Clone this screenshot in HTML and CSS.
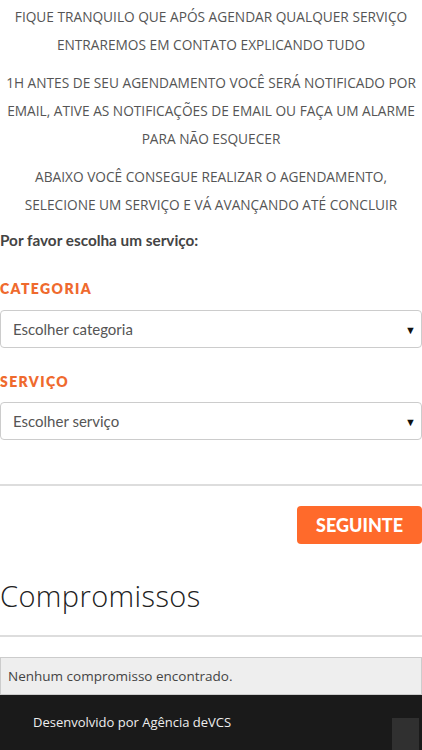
FILE: index.html
```html
<!DOCTYPE html>
<html lang="pt">
<head>
<meta charset="utf-8">
<title>Agendamento</title>
<link rel="stylesheet" href="styles.css">
</head>
<body>
<main class="page">
  <section class="intro">
    <p>FIQUE TRANQUILO QUE APÓS AGENDAR QUALQUER SERVIÇO ENTRAREMOS EM CONTATO EXPLICANDO TUDO</p>
    <p>1H ANTES DE SEU AGENDAMENTO VOCÊ SERÁ NOTIFICADO POR EMAIL, ATIVE AS NOTIFICAÇÕES DE EMAIL OU FAÇA UM ALARME PARA NÃO ESQUECER</p>
    <p>ABAIXO VOCÊ CONSEGUE REALIZAR O AGENDAMENTO, SELECIONE UM SERVIÇO E VÁ AVANÇANDO ATÉ CONCLUIR</p>
  </section>
  <form class="booking">
    <h3 class="prompt">Por favor escolha um serviço:</h3>
    <label class="field-label field-first">CATEGORIA</label>
    <div class="select"><span>Escolher categoria</span><span class="arrow">▼</span></div>
    <label class="field-label">SERVIÇO</label>
    <div class="select"><span>Escolher serviço</span><span class="arrow">▼</span></div>
    <hr class="rule rule-form">
    <div class="actions"><button type="button" class="btn">SEGUINTE</button></div>
  </form>
  <section class="appointments">
    <h2 class="title">Compromissos</h2>
    <hr class="rule rule-title">
    <div class="empty">Nenhum compromisso encontrado.</div>
  </section>
</main>
<footer class="footer">
  <span>Desenvolvido por Agência deVCS</span>
  <div class="totop"></div>
</footer>
</body>
</html>
```
FILE: styles.css
```css
* { box-sizing: border-box; }
html, body { margin: 0; padding: 0; background: #fff; }
body { font-family: "Open Sans", "Liberation Sans", sans-serif; color: #555; width: 422px; overflow: hidden; }
.intro { padding-top: 3px; }
.intro p {
  margin: 0 0 10px;
  text-align: center;
  font-size: 13.7px;
  line-height: 28px;
  font-weight: 400;
  color: #555;
}
.booking { display: flex; flex-direction: column; }
.prompt {
  margin: 0;
  font-family: "Lato", "Open Sans", sans-serif;
  font-size: 15.3px;
  font-weight: 700;
  color: #444;
  line-height: 22px;
}
.field-label {
  display: block;
  margin-top: 24px;
  font-family: "Lato", "Open Sans", sans-serif;
  font-size: 14px;
  font-weight: 800;
  letter-spacing: 1.4px;
  color: #ef6a2e;
  line-height: 20px;
}
.field-first { margin-top: 28px; }
.select {
  margin-top: 10px;
  height: 38px;
  border: 1px solid #ccc;
  border-radius: 4px;
  display: flex;
  align-items: center;
  justify-content: space-between;
  padding: 0 5px 0 12px;
  font-family: "Lato", "Open Sans", sans-serif;
  font-size: 15px;
  color: #555;
}
.field-first + .select { margin-top: 11px; }
.arrow { font-size: 11px; color: #111; }
.rule { border: 0; height: 2px; background: #ddd; margin: 0; }
.rule-form { margin-top: 44px; }
.actions { display: flex; justify-content: flex-end; margin-top: 20px; }
.btn {
  width: 125px;
  height: 38px;
  border: 0;
  border-radius: 4px;
  background: #ff6a2b;
  color: #fff;
  font-family: "Lato", "Open Sans", sans-serif;
  font-weight: 900;
  font-size: 18px;
  padding: 0;
}
.appointments { margin-top: 35px; }
.title {
  margin: 0;
  font-family: "Open Sans", sans-serif;
  font-weight: 300;
  font-size: 29px;
  line-height: 34px;
  color: #222;
  letter-spacing: 0.4px;
}
.rule-title { margin-top: 22px; }
.empty {
  margin-top: 20px;
  height: 38px;
  background: #eee;
  border: 1px solid #ccc;
  display: flex;
  align-items: center;
  padding-left: 7px;
  font-size: 13.5px;
  color: #444;
}
.footer {
  height: 55px;
  background: #1a1a1a;
  position: relative;
  padding: 18px 0 0 33px;
  font-size: 13px;
  line-height: 19px;
  color: #eee;
}
.totop {
  position: absolute;
  right: 3px;
  top: 23px;
  width: 27px;
  height: 40px;
  background: #303030;
}
```
